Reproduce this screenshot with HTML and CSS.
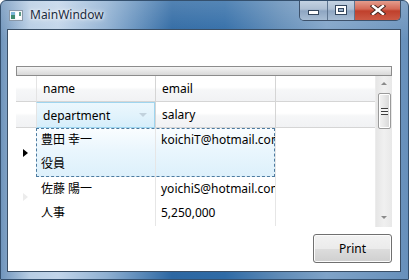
FILE: index.html
```html
<!DOCTYPE html>
<html lang="ja">
<head>
    <meta charset="UTF-8">
    <title>MainWindow</title>
    <link rel="stylesheet" href="styles.css">
</head>
<body>
    <div class="window">
        <div class="titlebar">
            <svg class="app-icon" width="14" height="11" viewBox="0 0 14 11">
                <rect x="0.5" y="0.5" width="13" height="10" fill="#f4f6f8" stroke="#8a98a8"/>
                <rect x="2" y="2" width="4" height="7" fill="#3f8a6e"/>
                <rect x="2" y="2" width="4" height="3" fill="#7fb7d8"/>
                <rect x="7" y="2" width="5" height="7" fill="#ffffff"/>
                <rect x="10" y="2" width="2" height="4" fill="#5c9b86"/>
            </svg>
            <span class="title">MainWindow</span>
            <div class="caption">
                <div class="cap-btn min"><span class="glyph-min"></span></div>
                <div class="cap-btn max"><span class="glyph-max"></span></div>
                <div class="cap-btn close">
                    <svg width="16" height="10" viewBox="0 0 16 10">
                        <path d="M3 1 L13 9 M13 1 L3 9" stroke="#4a2a24" stroke-width="4.4" stroke-linecap="square"/>
                        <path d="M3 1 L13 9 M13 1 L3 9" stroke="#ffffff" stroke-width="2.4" stroke-linecap="square"/>
                    </svg>
                </div>
            </div>
        </div>

        <div class="client">
            <div class="datagrid">
                <div class="group-bar"></div>
                <div class="grid-body">
                    <div class="table">
                        <div class="row header-row">
                            <div class="rh"></div>
                            <div class="cell hd">name</div>
                            <div class="cell hd">email</div>
                            <div class="filler"></div>
                        </div>
                        <div class="row header-row">
                            <div class="rh"></div>
                            <div class="cell hd active">department<span class="sort"></span></div>
                            <div class="cell hd">salary</div>
                            <div class="filler"></div>
                        </div>

                        <div class="row data-row selected">
                            <div class="rh"><span class="marker"></span></div>
                            <div class="cells">
                                <div class="cell">豊田 幸一</div>
                                <div class="cell">koichiT@hotmail.com</div>
                                <div class="cell">役員</div>
                                <div class="cell"></div>
                            </div>
                            <div class="filler"></div>
                        </div>
                        <div class="row data-row">
                            <div class="rh"><span class="marker faint"></span></div>
                            <div class="cells">
                                <div class="cell">佐藤 陽一</div>
                                <div class="cell">yoichiS@hotmail.com</div>
                                <div class="cell">人事</div>
                                <div class="cell">5,250,000</div>
                            </div>
                            <div class="filler"></div>
                        </div>
                    </div>

                    <div class="scrollbar">
                        <span class="arrow up"></span>
                        <div class="thumb">
                            <span class="grip"></span>
                        </div>
                        <span class="arrow down"></span>
                    </div>
                </div>
            </div>

            <div class="actions">
                <button class="print">Print</button>
            </div>
        </div>
    </div>
</body>
</html>
```

FILE: styles.css
```css
body {
    margin: 0;
    font-family: "Segoe UI", "Noto Sans", "Noto Sans CJK JP", sans-serif;
    font-size: 12px;
    color: #000000;
    background: #ffffff;
}
.window {
    width: 409px;
    height: 280px;
    box-sizing: border-box;
    border: 1px solid #34506e;
    border-radius: 6px 6px 0 0;
    background:
        linear-gradient(to bottom, rgba(255, 255, 255, 0.18), rgba(255, 255, 255, 0) 40px),
        linear-gradient(to right, #7095bc 0%, #b7cde4 7%, #c2d5ea 14%, #8fb0d2 26%, #2c67a2 42%, #2f6ba6 55%, #5e8ab6 68%, #7fa3c8 80%, #6790bb 100%);
    display: flex;
    flex-direction: column;
    overflow: hidden;
}
.titlebar {
    height: 28px;
    display: flex;
    align-items: flex-start;
    flex-shrink: 0;
}
.app-icon {
    margin: 9px 0 0 8px;
}
.title {
    margin: 6px 0 0 7px;
    font-size: 12px;
    line-height: 16px;
    color: #1b2c40;
    text-shadow: 0 0 6px #ffffff, 0 0 3px #ffffff;
}
.caption {
    margin: -1px 7px 0 auto;
    display: flex;
    height: 20px;
    border: 1px solid #3d526c;
    border-top: none;
    border-radius: 0 0 5px 5px;
    overflow: hidden;
}
.cap-btn {
    display: flex;
    align-items: center;
    justify-content: center;
    box-sizing: border-box;
    height: 20px;
}
.min, .max {
    width: 28px;
    background: linear-gradient(to bottom, #c6d5e4 0%, #aebfd3 45%, #8ea6c2 55%, #a8bdd4 100%);
    border-right: 1px solid #5e7590;
}
.max {
    width: 27px;
}
.close {
    width: 45px;
    background: linear-gradient(to bottom, #e6a394 0%, #d46a57 45%, #c0402c 55%, #cc5a45 100%);
}
.glyph-min {
    width: 9px;
    height: 3px;
    margin-top: 5px;
    background: #ffffff;
    border: 1px solid #34475e;
}
.glyph-max {
    width: 6px;
    height: 4px;
    border: 2px solid #ffffff;
    outline: 1px solid #34475e;
    box-shadow: inset 0 0 0 1px #34475e;
}
.client {
    margin: 0 7px 7px 6px;
    flex: 1;
    background: #ffffff;
    border: 1px solid #3a4f66;
    padding: 36px 8px 0 8px;
    display: flex;
    flex-direction: column;
}
.group-bar {
    height: 8px;
    border: 1px solid #8c8c8c;
    background: linear-gradient(to bottom, #f4f4f4, #d9d9d9);
}
.grid-body {
    display: flex;
    height: 151px;
}
.table {
    flex: 1;
    display: flex;
    flex-direction: column;
    overflow: hidden;
}
.row {
    display: grid;
    grid-template-columns: 20px 239px 1fr;
}
.header-row {
    grid-template-columns: 20px 119px 120px 1fr;
    height: 26px;
}
.header-row .rh,
.header-row .filler,
.cell.hd {
    box-sizing: border-box;
    border-bottom: 1px solid #d5d5d5;
    background: linear-gradient(to bottom, #ffffff 0%, #ffffff 45%, #f6f7f8 55%, #f1f2f4 100%);
}
.header-row .cell.hd + .cell.hd,
.header-row .filler {
    border-left: 1px solid #d5d5d5;
}
.header-row .rh + .cell.hd {
    border-left: 1px solid #e4e4e4;
}
.cell {
    padding: 0 6px;
    line-height: 24px;
    white-space: nowrap;
    overflow: hidden;
}
.cell.hd {
    position: relative;
    line-height: 25px;
}
.cell.active {
    border: 1px solid #9fd5ef;
    background: linear-gradient(to bottom, #ebf7fd 0%, #e2f3fc 50%, #d6eefb 100%);
}
.sort {
    position: absolute;
    right: 7px;
    top: 10px;
    border-left: 4px solid transparent;
    border-right: 4px solid transparent;
    border-top: 4px solid #c2d2dd;
}
.data-row {
    height: 49px;
}
.data-row .rh {
    display: flex;
    align-items: center;
    justify-content: center;
}
.data-row .filler {
    border-left: 1px solid #e6e6e6;
}
.cells {
    display: grid;
    grid-template-columns: 119px 120px;
    grid-template-rows: 24px 25px;
    background: linear-gradient(to right, #e6e6e6, #e6e6e6) no-repeat 119px 0 / 1px 100%;
}
.cells .cell:nth-child(odd) {
    padding-left: 5px;
}
.cells .cell:nth-child(even) {
    padding-left: 6px;
}
.selected .cells {
    background:
        linear-gradient(to right, #e6e6e6, #e6e6e6) no-repeat 119px 0 / 1px 100%,
        linear-gradient(to bottom, #fafdff 0%, #eaf6fd 45%, #dcf0fb 100%);
    outline: 1px dashed #4d7ba0;
    outline-offset: -1px;
}
.marker {
    margin-left: -2px;
    border-top: 4px solid transparent;
    border-bottom: 4px solid transparent;
    border-left: 5px solid #000000;
}
.marker.faint {
    margin-top: -10px;
    border-left-color: #ececec;
}
.scrollbar {
    width: 16px;
    background: linear-gradient(to right, #e6e6e6, #f0f0f0 50%, #e8e8e8);
    border-left: 1px solid #ececec;
    display: flex;
    flex-direction: column;
    align-items: center;
    position: relative;
}
.arrow {
    position: absolute;
    left: 5px;
    border-left: 3px solid transparent;
    border-right: 3px solid transparent;
}
.arrow.up {
    top: 6px;
    border-bottom: 3px solid #8a8a8a;
}
.arrow.down {
    bottom: 8px;
    border-top: 3px solid #8a8a8a;
}
.thumb {
    margin-top: 17px;
    width: 13px;
    height: 36px;
    box-sizing: border-box;
    border: 1px solid #9a9a9a;
    border-radius: 2px;
    background: linear-gradient(to right, #f4f4f4, #e6e6e6 50%, #d6d6d6);
    box-shadow: inset 0 0 0 1px #ffffff;
    display: flex;
    align-items: center;
    justify-content: center;
}
.grip {
    width: 7px;
    height: 7px;
    background: repeating-linear-gradient(to bottom, #3e3e3e 0, #3e3e3e 1px, #f4f4f4 1px, #f4f4f4 3px);
}
.actions {
    display: flex;
    justify-content: flex-end;
    margin-top: 7px;
}
.print {
    width: 79px;
    height: 29px;
    font-family: inherit;
    font-size: 12px;
    color: #000000;
    border: 1px solid #707070;
    border-radius: 3px;
    background: linear-gradient(to bottom, #f2f2f2 0%, #ebebeb 50%, #dddddd 51%, #cfcfcf 100%);
    box-shadow: inset 0 0 0 1px #fcfcfc;
    padding: 0;
}
```
